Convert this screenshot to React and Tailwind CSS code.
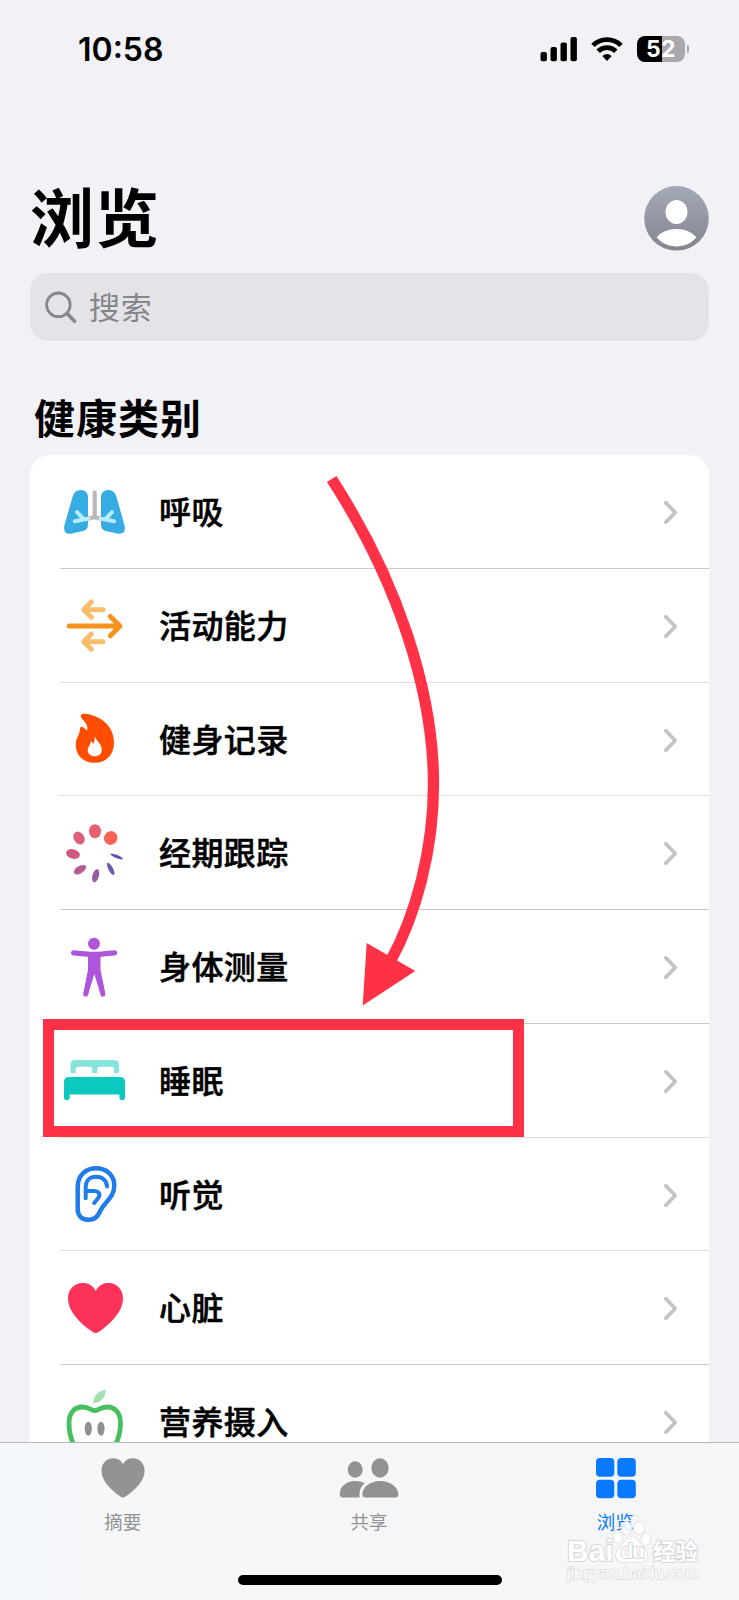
const LungsIcon = () => (
  <>
    <path d="M18.5 35Q26 35 26 43V69Q26 75 21 76L9 78.8Q.8 79.4 2.4 70.5L10.5 42Q12.5 35 18.5 35Z" fill="#36ace2" />
    <path d="M46.5 35Q39 35 39 43V69Q39 75 44 76L56 78.8Q64.2 79.4 62.6 70.5L54.5 42Q52.5 35 46.5 35Z" fill="#36ace2" />
    <path d="M26 63.6L31.5 62.3H33.5L39 63.6M32.7 37.5V62" fill="none" stroke="#bcb8b9" strokeWidth="4.2" strokeLinecap="round" />
    <path d="M26.5 63.6L12.8 66.2M21.5 63.8L15 57.2M38.5 63.6L52.2 66.2M43.5 63.8L50 57.2" fill="none" stroke="#b9ecff" strokeWidth="4" strokeLinecap="round" />
  </>
)

const MobilityIcon = () => (
  <g fill="none" strokeLinecap="round" strokeLinejoin="round" strokeWidth="5">
    <path d="M41 40.7H22M29.3 33L21.7 40.7L29.3 48.2M41 72.7H22M29.3 65L21.7 72.7L29.3 80.2" stroke="#fabd6c" />
    <path d="M7.2 57H57M48.3 47.5L58 57L48.3 66.8" stroke="#f6921e" />
  </g>
)

const FlameIcon = () => (
  <path
    fill="#ff4d00"
    fillRule="evenodd"
    d="M25 47.8C26.5 43.5 24.3 40.5 20.3 36C17.5 32.8 19 30.2 23 30.7C39 32.5 52 43 52 59.5C52 72 44 79.8 32.5 79.8C21 79.8 13.7 72 13.7 61.5C13.7 54.8 17.8 52 18 46C18.1 42.7 20.8 43 25 47.8ZM32.7 53C34 57.5 39.8 61 39.8 66.8C39.8 71 36.8 73.3 32.7 73.3C28.6 73.3 25.7 70.8 25.7 67C25.7 63.5 29 62.3 28.7 57.8C30 58.5 31 60 31.1 61.5C32.6 59 32.8 56.5 32.7 53Z"
  />
)

const PETALS = [
  { x: 33, y: 35.3, rx: 6, ry: 7, r: 0, fill: '#e6606f' },
  { x: 48.7, y: 42, rx: 6.7, ry: 7, r: 40, fill: '#f96552' },
  { x: 17, y: 42, rx: 5.2, ry: 6.8, r: -32, fill: '#dc6077' },
  { x: 11, y: 58, rx: 7, ry: 4.7, r: 14, fill: '#cf5b83' },
  { x: 18, y: 73.7, rx: 6.8, ry: 3.7, r: -32, fill: '#b95b92' },
  { x: 33.7, y: 79.7, rx: 3.2, ry: 6.7, r: 16, fill: '#955ba3' },
  { x: 48.7, y: 72.9, rx: 2.3, ry: 6.8, r: -27, fill: '#6f5bb0' },
  { x: 54.7, y: 60.5, rx: 6.6, ry: 1.6, r: 22, fill: '#5c52ad' },
]

const CycleIcon = () => PETALS.map(p => (
  <ellipse key={p.fill} cx={p.x} cy={p.y} rx={p.rx} ry={p.ry} fill={p.fill} transform={`rotate(${p.r} ${p.x} ${p.y})`} />
))

const BodyIcon = () => (
  <g fill="#ae55d9" stroke="#ae55d9" strokeLinecap="round" strokeLinejoin="round">
    <circle cx="32" cy="33.7" r="6" stroke="none" />
    <path d="M11.6 42.8L28 44.4H36L52.6 42.8" fill="none" strokeWidth="5.2" />
    <path d="M26 44H38.5V60L43.3 84H38.5L32.3 64L26.2 84H21.3L26 60Z" stroke="none" />
    <path d="M28.6 61L23.7 84.2M35.8 61L40.9 84.2" fill="none" strokeWidth="4.8" />
  </g>
)

const BedIcon = () => (
  <>
    <path d="M13.5 36H52Q57 36 57 41V49H52V45.5Q52 42.7 49.2 42.7H38Q35.2 42.7 35.2 45.5V49H30.2V45.5Q30.2 42.7 27.4 42.7H16.5Q13.7 42.7 13.7 45.5V49H8.4V41Q8.4 36 13.5 36Z" fill="#86e4dd" />
    <path d="M7 53H58Q63 53 63 58V73.5Q63 76.3 60.2 76.3Q57.4 76.3 57.4 73.5V70.5H7.7V73.5Q7.7 76.3 4.9 76.3Q2 76.3 2 73.5V58Q2 53 7 53Z" fill="#0bc9be" />
  </>
)

const EarIcon = () => (
  <g fill="none" stroke="#217be8" strokeWidth="4.5" strokeLinecap="round" strokeLinejoin="round">
    <path d="M15.7 49C15.7 37 24 30.2 34.2 30.2C44.6 30.2 52.3 37.5 52.3 47.5C52.3 60 42.5 63.5 38 73.5C35.6 79 32 81.8 26.8 81.8C20 81.8 15.7 78 15.7 71Z" />
    <path d="M23.7 60.3V49C23.7 42.5 28 38.8 34 38.8C40.5 38.8 45 42.7 45 48.6M24.5 53H31.5C36.8 53 38.6 56 36.6 59.4L32.2 65" strokeWidth="4" />
  </g>
)

const HeartIcon = () => (
  <path d="M33.7 40C36.5 34.5 41 32 46.5 32C55 32 61 38.5 61 47.5C61 60 50 71.5 37 80.8Q33.7 83.2 30.4 80.8C17 71.5 6 60 6 47.5C6 38.5 12 32 20.8 32C26.5 32 31 34.5 33.7 40Z" fill="#fd3259" />
)

const AppleIcon = () => (
  <>
    <path d="M31.4 38.3C31 31.5 35.5 26.5 43.3 24.5C44.3 31.5 39.5 37.8 31.4 38.3Z" fill="#a3dfae" />
    <path d="M32.7 45.7C36 45.5 38.5 42 45 42C54 42 58.5 49 58.5 58C58.5 76 48 93 40 93H25C17 93 7 76 7 58C7 49 11.5 42 20.5 42C27 42 29.5 45.5 32.7 45.7Z" fill="none" stroke="#47bf5f" strokeWidth="4.8" />
    <ellipse cx="26.3" cy="63.7" rx="3.6" ry="7" fill="#8f9092" />
    <ellipse cx="39" cy="63.7" rx="3.6" ry="7" fill="#8f9092" />
  </>
)

const CATEGORIES = [
  { name: '呼吸', Icon: LungsIcon, row: 'h-[114px]', line: 'bg-[#c8c8ca]' },
  { name: '活动能力', Icon: MobilityIcon, row: 'h-[114px]', line: 'bg-[#dfdfe1]' },
  { name: '健身记录', Icon: FlameIcon, row: 'h-[113px]', line: 'bg-[#e0e0e2]' },
  { name: '经期跟踪', Icon: CycleIcon, row: 'h-[114px]', line: 'bg-[#c8c8ca]' },
  { name: '身体测量', Icon: BodyIcon, row: 'h-[114px]', line: 'bg-[#c8c8ca]' },
  { name: '睡眠', Icon: BedIcon, row: 'h-[114px]', line: 'bg-[#e0e0e2]' },
  { name: '听觉', Icon: EarIcon, row: 'h-[113px]', line: 'bg-[#dfdfe1]' },
  { name: '心脏', Icon: HeartIcon, row: 'h-[114px]', line: 'bg-[#c8c8ca]' },
  { name: '营养摄入', Icon: AppleIcon, row: 'h-[114px]', line: 'bg-[#c8c8ca]' },
]

function StatusBar() {
  return (
    <header className="h-[98px] shrink-0 flex items-center justify-between pl-[78px] pr-[50px]">
      <span className="pt-[2px] font-['Inter'] font-semibold text-[32px] leading-none">10:58</span>
      <div className="flex items-center">
        <svg width="37" height="26" viewBox="0 0 37 26">
          <rect x="0.5" y="16" width="6.4" height="9.2" rx="2" />
          <rect x="10.5" y="11" width="6.4" height="14.2" rx="2" />
          <rect x="20.5" y="6.5" width="6.4" height="18.7" rx="2" />
          <rect x="30.5" y="1" width="6.4" height="24.2" rx="2" />
        </svg>
        <svg className="ml-[14px]" width="32" height="26" viewBox="0 0 32 26">
          <path d="M2 9.3C9.5 1.6 22.5 1.6 30 9.3" fill="none" stroke="#000" strokeWidth="4.8" />
          <path d="M7.2 15.2C12 10.3 20 10.3 24.8 15.2" fill="none" stroke="#000" strokeWidth="4.8" />
          <path d="M11.3 20Q16 16 20.7 20L16 25Z" />
        </svg>
        <div className="ml-[14px] w-12 h-[26px] rounded-[8px] bg-linear-to-r from-black from-52% to-[#a9a9ad] to-52% flex items-center justify-center">
          <span className="font-['Inter'] font-bold text-[23px] leading-none text-white tracking-[0.5px]">52</span>
        </div>
        <div className="ml-[2px] w-[2px] h-2 rounded-r-full bg-[#a9a9ad]" />
      </div>
    </header>
  )
}

function CategoryRow({ name, Icon, row, line }) {
  return (
    <li className={`${row} pl-[30px] flex flex-col`}>
      <div className="flex-1 min-h-0 flex items-center pl-[2px] pr-[31px]">
        <svg className="self-start w-16 h-[112px] shrink-0 overflow-visible" viewBox="0 0 64 112"><Icon /></svg>
        <span className="flex-1 ml-[33px] pb-[3px] text-[32px] leading-10 font-medium tracking-[0.4px] [-webkit-text-stroke:0.5px_#000]">{name}</span>
        <svg className="mt-[2px]" width="15" height="25" viewBox="0 0 15 25" fill="none" stroke="#c4c4c6" strokeWidth="3.8" strokeLinecap="round" strokeLinejoin="round">
          <path d="M2.8 2.8L12.2 12.5L2.8 22.2" />
        </svg>
      </div>
      <div className={`h-px ${line}`} />
    </li>
  )
}

function TabItem({ label, color, children }) {
  return (
    <button className={`flex-1 flex flex-col items-center pt-[14px] ${color}`}>
      <svg width="60" height="42" viewBox="0 0 60 42" fill="currentColor">{children}</svg>
      <span className="mt-[10px] pr-px text-[18.5px] leading-6">{label}</span>
    </button>
  )
}

function TabBar() {
  return (
    <nav className="h-[158px] shrink-0 border-t border-[#b9b9bb] bg-linear-to-r from-[#f4f7fa] via-[#f6f6f7] via-40% to-[#f6f6f9] flex flex-col justify-between">
      <div className="flex">
        <TabItem label="摘要" color="text-[#929394]">
          <path d="M30 7C32.3 3 35.8 1.3 40 1.3C46.8 1.3 51.6 6.5 51.6 14C51.6 23.5 42.8 32.5 32.3 39.8Q30 41.3 27.8 39.8C17.3 32.5 8.5 23.5 8.5 14C8.5 6.5 13.3 1.3 20 1.3C24.2 1.3 27.7 3 30 7Z" />
        </TabItem>
        <TabItem label="共享" color="text-[#929292]">
          <ellipse cx="16.2" cy="12.5" rx="7.5" ry="8.3" />
          <ellipse cx="41" cy="11" rx="8.7" ry="9.7" />
          <path d="M.8 37C.8 30 7 24 16.2 24C20 24 23 24.7 25.7 26.2C22 29 20 33.5 20.6 40.5H4Q.8 40.5 .8 37Z" />
          <path d="M23.3 37.5C23.3 30.5 30.5 24 41 24C52 24 59.3 30.5 59.3 37.5Q59.3 40.5 56.3 40.5H26.3Q23.3 40.5 23.3 37.5Z" />
        </TabItem>
        <TabItem label="浏览" color="text-[#077aff]">
          <rect x="10" y="1" width="18.3" height="18.7" rx="4" />
          <rect x="31.3" y="1" width="18.5" height="18.7" rx="4" />
          <rect x="10" y="22.8" width="18.3" height="18.4" rx="4" />
          <rect x="31.3" y="22.8" width="18.5" height="18.4" rx="4" />
        </TabItem>
      </div>
      <div className="mb-[15px] ml-[238px] w-[264px] h-[10px] rounded-full bg-black" />
    </nav>
  )
}

function Watermark() {
  return (
    <div className="absolute left-[567px] top-[1520px] w-[134px] text-white [paint-order:stroke_fill] [-webkit-text-stroke:2px_#d6d6d8]">
      <div className="h-[44px] flex items-end">
        <span className="font-['Liberation_Sans'] font-bold text-[30px] leading-[26px] w-[46px]">Bai</span>
        <div className="relative w-[38px] h-[44px]">
          <svg width="38" height="44" viewBox="0 0 38 44" fill="#fff" fillOpacity="0.85" stroke="#d8d8da" strokeWidth="1.2">
            <ellipse cx="5" cy="17" rx="4.4" ry="6" />
            <ellipse cx="13.5" cy="8" rx="5" ry="6.5" />
            <ellipse cx="26" cy="8" rx="5" ry="6.5" />
            <ellipse cx="33" cy="19" rx="4.4" ry="6" />
            <path d="M18.5 17C24 17 26 22 29.5 26.5C33 30.5 35 33 34 37.5C32.5 43.5 26 42 19 42C12 42 5 43.5 3.2 37.5C2 33 4.5 30.5 8 26.5C11.5 22 13 17 18.5 17Z" />
          </svg>
          <span className="absolute left-[8px] top-[21px] font-['Liberation_Sans'] text-[20px] leading-[20px] font-bold tracking-[-1px]">du</span>
        </div>
        <span className="ml-[2px] text-[22.5px] leading-[27px] font-bold">经验</span>
      </div>
      <div className="mt-px font-['Liberation_Sans'] text-[17px] leading-[18px] tracking-[-0.3px] [-webkit-text-stroke:1.4px_#dadadc]">jingyan.baidu.com</div>
    </div>
  )
}

export default function App() {
  return (
    <div className="relative w-[739px] h-[1600px] overflow-hidden flex flex-col bg-[#f1f1f6] text-black font-['Noto_Sans_CJK_SC',sans-serif]">
      <StatusBar />

      <main className="flex-1 min-h-0 overflow-hidden px-[30px] flex flex-col">
        {/* Title + profile */}
        <div className="mt-[72px] h-[96px] shrink-0 flex items-center justify-between">
          <h1 className="text-[64px] leading-[88px] pb-2 font-bold tracking-[1px]">浏览</h1>
          <svg width="65" height="65" viewBox="0 0 65 65">
            <defs>
              <linearGradient id="avatar" x1="0" y1="0" x2="0" y2="1">
                <stop offset="0" stopColor="#a4a9b8" />
                <stop offset="1" stopColor="#83858e" />
              </linearGradient>
            </defs>
            <circle cx="32.5" cy="32.3" r="32.3" fill="url(#avatar)" />
            <ellipse cx="32.5" cy="26" rx="11" ry="12" fill="#fff" />
            <path d="M12.7 51.5C17 46 24 43 32.5 43C41 43 48 46 52.3 51.5C47 57.5 40 60.4 32.5 60.4C25 60.4 18 57.5 12.7 51.5Z" fill="#fff" />
          </svg>
        </div>

        <div className="mt-[7px] h-[68px] shrink-0 rounded-[18px] bg-[#e3e3e8] flex items-center pl-[15px]">
          <svg width="33" height="33" viewBox="0 0 33 33" fill="none" stroke="#86868b" strokeLinecap="round">
            <circle cx="13.4" cy="13.8" r="11.8" strokeWidth="2.8" />
            <path d="M22.1 22.5L29.6 30.2" strokeWidth="3.6" />
          </svg>
          <span className="ml-[11px] pb-[3px] text-[31px] leading-10 tracking-[0.8px] text-[#868689]">搜索</span>
        </div>

        <h2 className="mt-[45px] h-[60px] mb-[9px] shrink-0 text-[41px] leading-[60px] font-bold tracking-[1px] pl-1">健康类别</h2>

        <ul className="shrink-0 rounded-[20px] bg-white">
          {CATEGORIES.map(c => <CategoryRow key={c.name} {...c} />)}
        </ul>
      </main>

      <TabBar />

      {/* Highlight on the sleep row, with the arrow leading to it */}
      <div className="absolute left-[43px] top-[1019px] w-[481px] h-[118px] border-[11px] border-[#ff3146]" />
      <svg className="absolute left-[320px] top-[470px]" width="130" height="545" viewBox="320 470 130 545">
        <path d="M331.7 479C397 580 433.5 690 433.5 784C433.5 850 416 915 390 962" fill="none" stroke="#ff3146" strokeWidth="11.3" />
        <path d="M366.7 943L415.3 971L362.7 1005.5Z" fill="#ff3146" />
      </svg>

      <Watermark />
    </div>
  )
}
